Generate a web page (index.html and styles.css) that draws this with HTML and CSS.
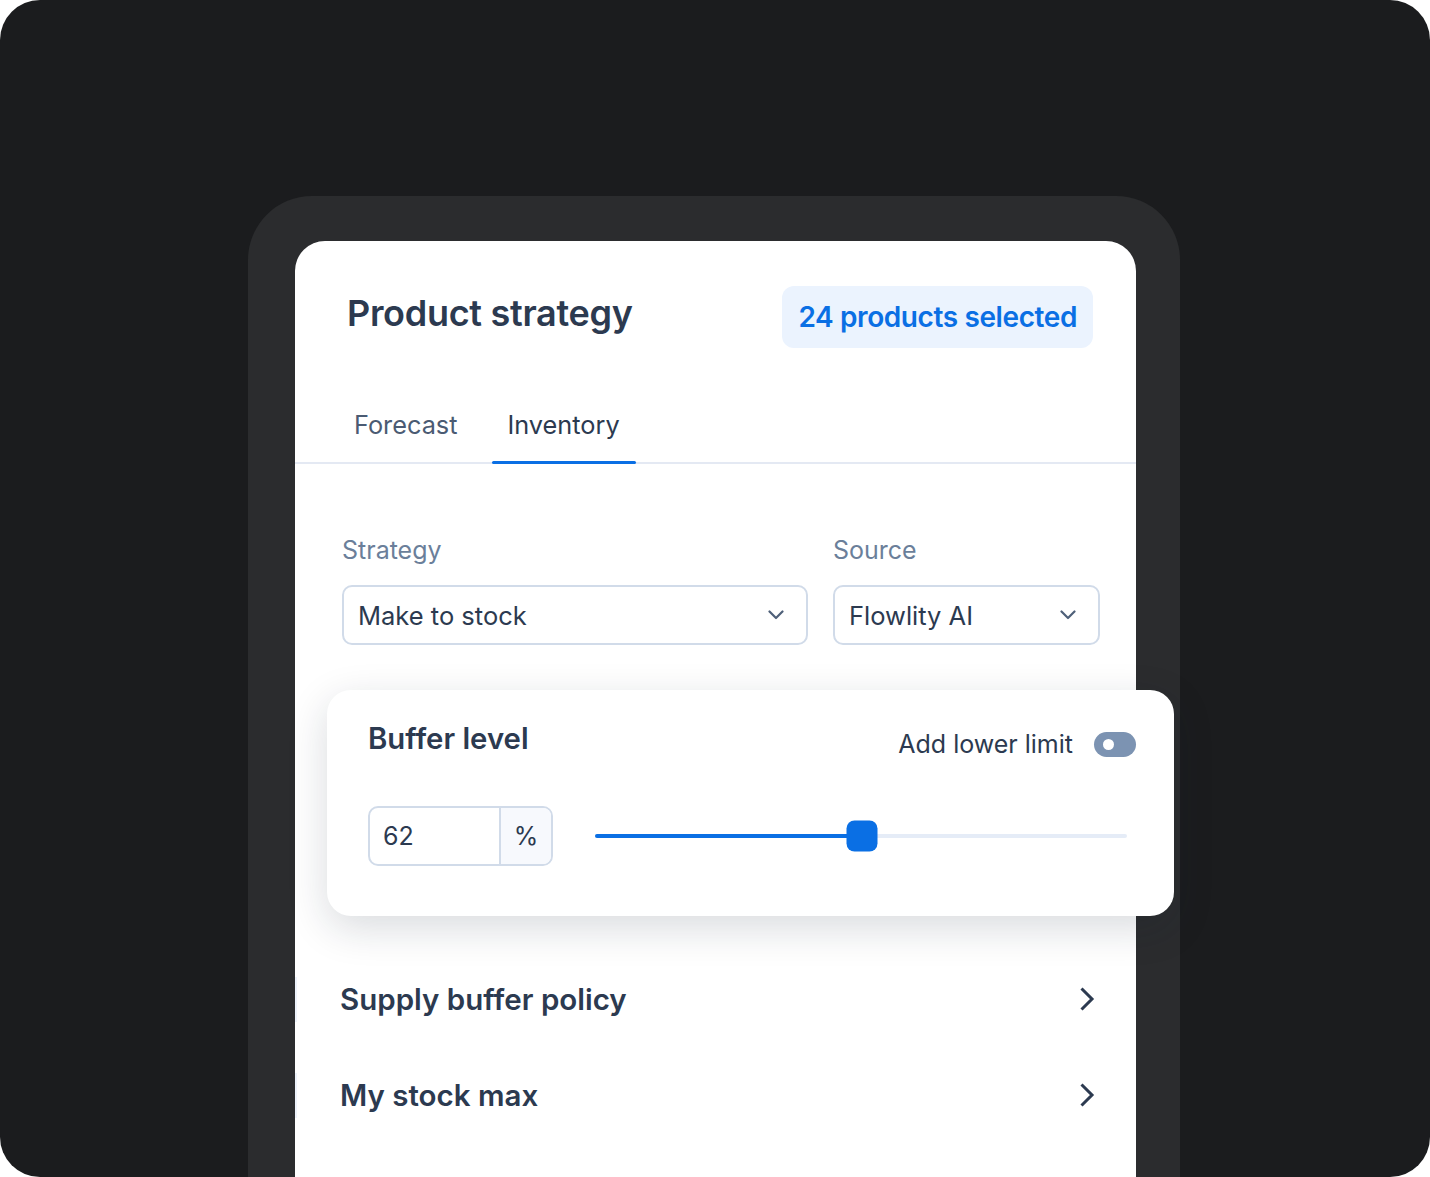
FILE: index.html
```html
<!DOCTYPE html>
<html lang="en">
<head>
    <meta charset="UTF-8">
    <meta name="viewport" content="width=device-width, initial-scale=1.0">
    <title>Product strategy</title>
    <link rel="stylesheet" href="styles.css">
</head>
<body>
    <div class="stage">
        <div class="phone">
            <div class="screen">
                <div class="header">
                    <h1 class="title">Product strategy</h1>
                    <div class="badge">24 products selected</div>
                </div>

                <div class="tabs">
                    <div class="tab">Forecast</div>
                    <div class="tab active">Inventory</div>
                </div>

                <div class="fields">
                    <div class="field field-strategy">
                        <label class="field-label">Strategy</label>
                        <div class="select">
                            <span>Make to stock</span>
                            <svg width="16" height="10" viewBox="0 0 16 10"><path d="M1.5 1.5 L8 8 L14.5 1.5" fill="none" stroke="#4f6079" stroke-width="2.2" stroke-linecap="round" stroke-linejoin="round"/></svg>
                        </div>
                    </div>
                    <div class="field field-source">
                        <label class="field-label">Source</label>
                        <div class="select">
                            <span>Flowlity AI</span>
                            <svg width="16" height="10" viewBox="0 0 16 10"><path d="M1.5 1.5 L8 8 L14.5 1.5" fill="none" stroke="#4f6079" stroke-width="2.2" stroke-linecap="round" stroke-linejoin="round"/></svg>
                        </div>
                    </div>
                </div>

                <div class="buffer-card">
                    <div class="buffer-top">
                        <h2 class="buffer-title">Buffer level</h2>
                        <div class="limit">
                            <span>Add lower limit</span>
                            <div class="toggle"><div class="knob"></div></div>
                        </div>
                    </div>
                    <div class="buffer-row">
                        <div class="number-input">
                            <div class="number-value">62</div>
                            <div class="number-unit">%</div>
                        </div>
                        <div class="slider">
                            <div class="slider-fill" style="width: 50.2%"></div>
                            <div class="slider-thumb" style="left: 50.2%"></div>
                        </div>
                    </div>
                </div>

                <div class="list">
                    <div class="list-item">
                        <div class="mark"></div>
                        <span class="list-text">Supply buffer policy</span>
                        <svg width="16" height="26" viewBox="0 0 16 26"><path d="M2.5 2.5 L13 13 L2.5 23.5" fill="none" stroke="#2c3a50" stroke-width="3"/></svg>
                    </div>
                    <div class="list-item">
                        <div class="mark"></div>
                        <span class="list-text">My stock max</span>
                        <svg width="16" height="26" viewBox="0 0 16 26"><path d="M2.5 2.5 L13 13 L2.5 23.5" fill="none" stroke="#2c3a50" stroke-width="3"/></svg>
                    </div>
                </div>
            </div>
        </div>
    </div>
</body>
</html>
```

FILE: styles.css
```css
body {
    margin: 0;
    padding: 0;
    background-color: #fff;
    font-family: 'Inter', 'Roboto', sans-serif;
    color: #2c3a50;
}

.stage {
    width: 1430px;
    height: 1177px;
    background-color: #1b1c1e;
    border-radius: 40px;
    overflow: hidden;
    padding-top: 196px;
    box-sizing: border-box;
}

.phone {
    width: 932px;
    height: 981px;
    margin-left: 248px;
    background-color: #2b2c2e;
    border-radius: 64px 64px 0 0;
    padding: 45px 44px 0 47px;
    box-sizing: border-box;
}

.screen {
    height: 100%;
    background-color: #fff;
    border-radius: 30px 30px 0 0;
}

/* header */
.header {
    display: flex;
    justify-content: space-between;
    align-items: flex-start;
    padding: 45px 43px 0 52px;
}

.title {
    margin: 5px 0 0;
    font-size: 36px;
    line-height: 44px;
    font-weight: 600;
    letter-spacing: -0.3px;
    color: #2c3a50;
}

.badge {
    background-color: #ebf3fe;
    color: #0a6fe4;
    border-radius: 12px;
    padding: 0 16px;
    height: 62px;
    line-height: 63px;
    font-size: 28px;
    font-weight: 600;
    letter-spacing: -0.4px;
}

/* tabs */
.tabs {
    display: flex;
    gap: 18px;
    margin-top: 61px;
    padding-left: 43px;
    border-bottom: 2px solid #e4e9f3;
}

.tab {
    position: relative;
    padding: 0 16px 21px;
    font-size: 25.3px;
    line-height: 32px;
    color: #4b5b73;
}

.tab.active {
    color: #2c3a50;
}

.tab.active::after {
    content: "";
    position: absolute;
    left: 0;
    right: 0;
    bottom: -2px;
    height: 3px;
    border-radius: 2px;
    background-color: #0a6fe4;
}

/* strategy / source */
.fields {
    display: flex;
    gap: 25px;
    padding: 71px 36px 0 47px;
}

.field-strategy {
    width: 466px;
}

.field-source {
    flex: 1;
}

.field-label {
    display: block;
    font-size: 25px;
    line-height: 30px;
    color: #6b7f9a;
    margin-bottom: 20px;
}

.select {
    display: flex;
    align-items: center;
    justify-content: space-between;
    height: 60px;
    box-sizing: border-box;
    border: 2px solid #d1dbe9;
    border-radius: 10px;
    padding: 0 22px 0 14px;
    font-size: 25.5px;
    color: #2c3a50;
}

/* buffer card */
.buffer-card {
    margin: 45px -38px 0 32px;
    background-color: #fff;
    border-radius: 24px;
    box-shadow: 0 12px 40px rgba(20, 30, 50, 0.16);
    padding: 31px 38px 50px 41px;
}

.buffer-top {
    display: flex;
    justify-content: space-between;
    align-items: flex-start;
}

.buffer-title {
    margin: 0;
    font-size: 29.3px;
    line-height: 36px;
    font-weight: 600;
    color: #2c3a50;
}

.limit {
    display: flex;
    align-items: center;
    gap: 21px;
    margin-top: 10px;
    font-size: 25px;
    line-height: 26px;
}

.toggle {
    width: 42px;
    height: 25px;
    border-radius: 13px;
    background-color: #7c93b2;
    display: flex;
    align-items: center;
    padding-left: 9px;
    box-sizing: border-box;
}

.knob {
    width: 11px;
    height: 11px;
    border-radius: 50%;
    background-color: #fff;
}

.buffer-row {
    display: flex;
    align-items: center;
    margin-top: 49px;
}

.number-input {
    display: flex;
    width: 185px;
    height: 60px;
    box-sizing: border-box;
    border: 2px solid #d1dbe9;
    border-radius: 10px;
    overflow: hidden;
    font-size: 25px;
}

.number-value {
    flex: 1;
    display: flex;
    align-items: center;
    padding-left: 13px;
}

.number-unit {
    width: 50px;
    display: flex;
    align-items: center;
    justify-content: center;
    border-left: 2px solid #d1dbe9;
    background-color: #f7f9fd;
}

.slider {
    position: relative;
    flex: 1;
    height: 4px;
    margin: 0 9px 0 42px;
    border-radius: 2px;
    background-color: #e5ecf7;
}

.slider-fill {
    height: 100%;
    border-radius: 2px;
    background-color: #0a6fe4;
}

.slider-thumb {
    position: absolute;
    top: 50%;
    width: 31px;
    height: 31px;
    border-radius: 8px;
    background-color: #0a6fe4;
    transform: translate(-50%, -50%);
}

/* list */
.list {
    margin-top: 35px;
}

.list-item {
    display: flex;
    align-items: center;
    height: 96px;
    padding-right: 41px;
}

.mark {
    width: 2px;
    height: 45px;
    background-color: #eef3fb;
    margin-right: 44px;
}

.list-text {
    flex: 1;
    font-size: 29.5px;
    font-weight: 600;
    color: #2c3a50;
    margin-left: -1px;
}
```
